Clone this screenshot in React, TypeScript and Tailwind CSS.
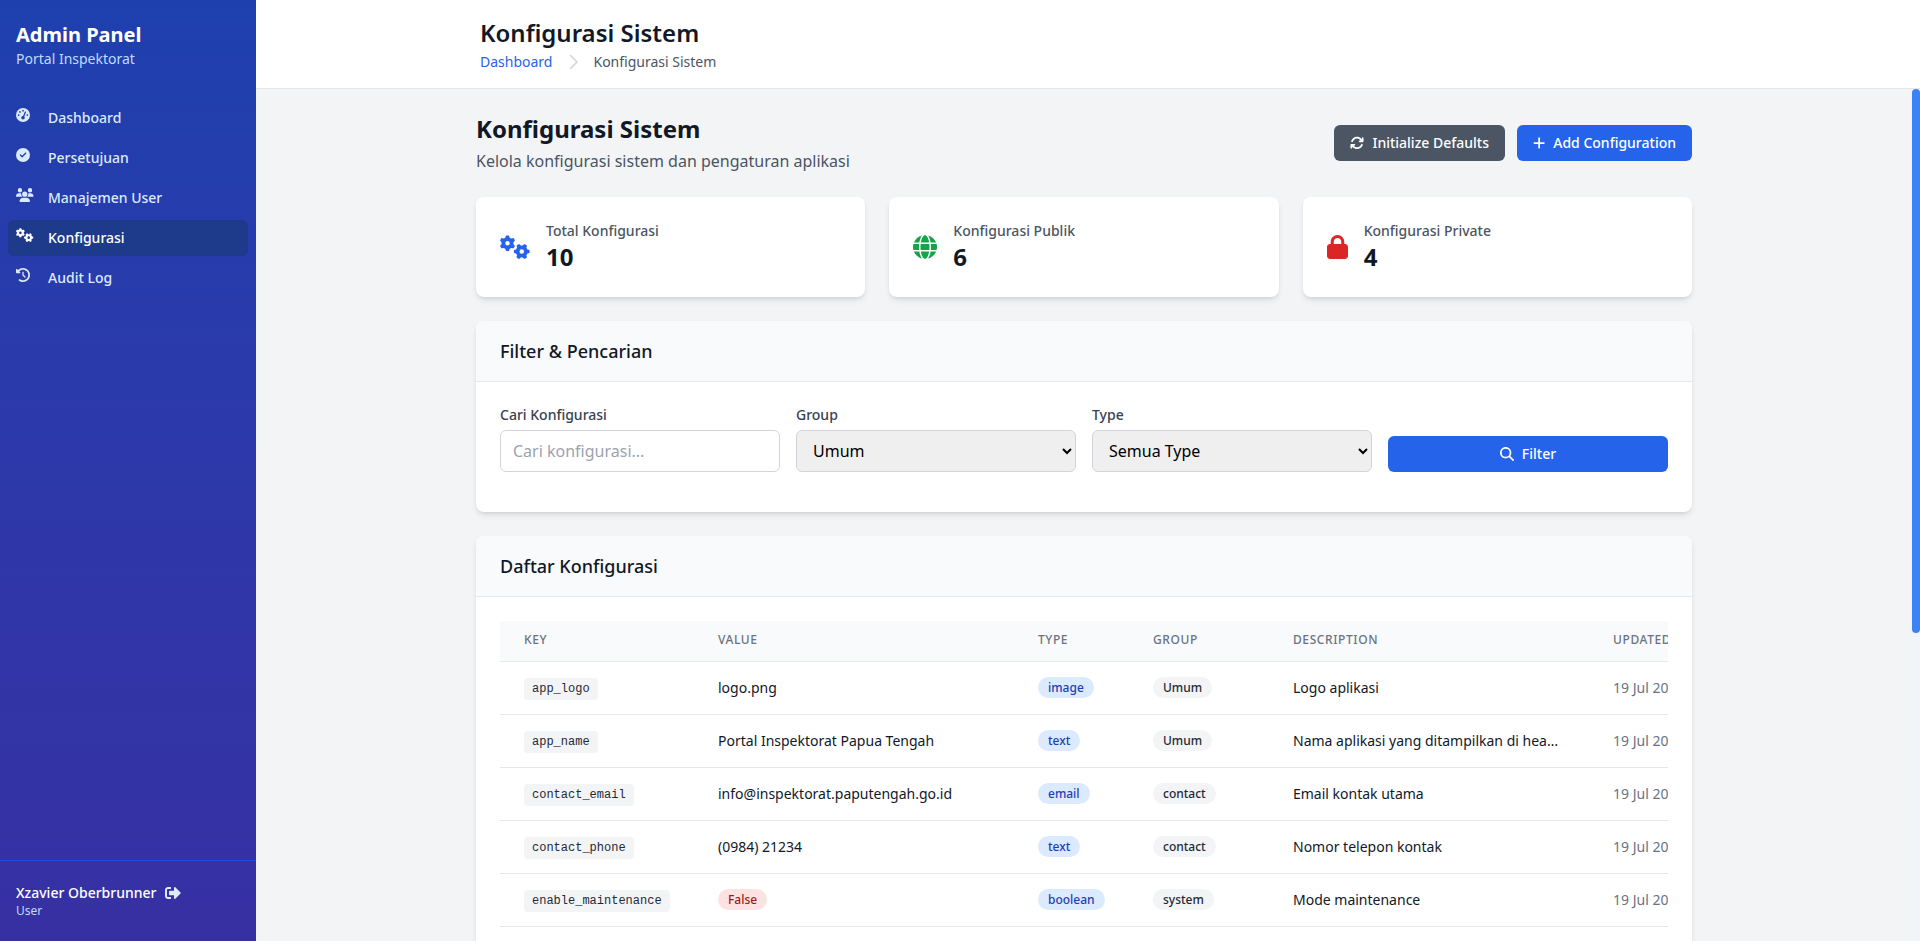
import React from 'react';
import { FaSignOutAlt } from 'react-icons/fa';
import {
    FaGaugeHigh,
    FaCircleCheck,
    FaUsers,
    FaGears,
    FaClockRotateLeft,
    FaArrowsRotate,
    FaPlus,
    FaGlobe,
    FaLock,
    FaMagnifyingGlass,
} from 'react-icons/fa6';

const navItems = [
    { label: 'Dashboard', icon: FaGaugeHigh, size: 'w-3.5' },
    { label: 'Persetujuan', icon: FaCircleCheck, size: 'w-3.5' },
    { label: 'Manajemen User', icon: FaUsers, size: 'w-[17.5px]' },
    { label: 'Konfigurasi', icon: FaGears, size: 'w-[17.5px]', active: true },
    { label: 'Audit Log', icon: FaClockRotateLeft, size: 'w-3.5' },
];

const rows = [
    { key: 'app_logo', value: 'logo.png', type: 'image', group: 'Umum', description: 'Logo aplikasi' },
    { key: 'app_name', value: 'Portal Inspektorat Papua Tengah', type: 'text', group: 'Umum', description: 'Nama aplikasi yang ditampilkan di header' },
    { key: 'contact_email', value: 'info@inspektorat.paputengah.go.id', type: 'email', group: 'contact', description: 'Email kontak utama' },
    { key: 'contact_phone', value: '(0984) 21234', type: 'text', group: 'contact', description: 'Nomor telepon kontak' },
    { key: 'enable_maintenance', value: false, type: 'boolean', group: 'system', description: 'Mode maintenance' },
    { key: 'enable_registration', value: true, type: 'boolean', group: 'system', description: 'Izinkan pendaftaran user' },
    { key: 'max_upload_size', value: '10', type: 'number', group: 'system', description: 'Ukuran maksimal upload (MB)' },
    { key: 'office_address', value: 'Nabire, Papua Tengah', type: 'text', group: 'contact', description: 'Alamat kantor' },
    { key: 'site_description', value: 'Portal resmi Inspektorat', type: 'text', group: 'Umum', description: 'Deskripsi situs' },
    { key: 'timezone', value: 'Asia/Jayapura', type: 'text', group: 'system', description: 'Zona waktu aplikasi' },
];

const stats = [
    { label: 'Total Konfigurasi', value: 10, icon: FaGears, className: 'w-[30px] text-[#2563eb]' },
    { label: 'Konfigurasi Publik', value: 6, icon: FaGlobe, className: 'w-6 text-[#16a34a]' },
    { label: 'Konfigurasi Private', value: 4, icon: FaLock, className: 'w-[21px] text-[#dc2626]' },
];

const Sidebar: React.FC = () => (
    <aside className="w-64 shrink-0 h-full flex flex-col bg-gradient-to-b from-[#1e40af] to-[#3730a3] text-white">
        <div className="px-4 pt-[21px] h-[100px]">
            <h1 className="text-xl font-bold leading-7">Admin Panel</h1>
            <p className="text-sm text-[#bfdbfe]">Portal Inspektorat</p>
        </div>
        <nav className="flex-1 px-2 flex flex-col gap-1">
            {navItems.map(item => (
                <a
                    key={item.label}
                    href="#"
                    className={`flex h-9 px-2 rounded-md text-sm font-medium leading-9 ${item.active ? 'bg-[#1e3a8a] text-white' : 'text-[#dbeafe]'}`}
                >
                    <span className="w-8 shrink-0 pt-2">
                        <item.icon className={`h-3.5 ${item.size}`} />
                    </span>
                    {item.label}
                </a>
            ))}
        </nav>
        <div className="h-[81px] border-t border-[#1d4ed8] px-4 pt-[22px]">
            <div className="flex items-center text-sm font-medium leading-5">
                Xzavier Oberbrunner
                <FaSignOutAlt className="ml-2 w-4 h-4 text-[#dbeafe]" />
            </div>
            <div className="text-xs text-[#bfdbfe]">User</div>
        </div>
    </aside>
);

const TopBar: React.FC = () => (
    <header className="h-[89px] shrink-0 bg-white border-b border-[#e5e7eb]">
        <div className="max-w-7xl mx-auto px-8 pt-[17px]">
            <h2 className="text-2xl font-semibold text-[#111827] leading-8">Konfigurasi Sistem</h2>
            <div className="flex items-center text-sm h-5 mt-[3px]">
                <a href="#" className="text-[#2563eb]">Dashboard</a>
                <svg className="w-6 h-6 ml-[9px] mr-2 text-[#d1d5db]" viewBox="0 0 24 24" fill="none" stroke="currentColor" strokeWidth="1.5">
                    <path d="M9 5l7 7-7 7" />
                </svg>
                <span className="text-[#4b5563]">Konfigurasi Sistem</span>
            </div>
        </div>
    </header>
);

const FilterCard: React.FC = () => (
    <section className="bg-white rounded-lg shadow-md mb-6 overflow-hidden">
        <div className="h-[61px] px-6 flex items-center bg-[#f9fafb] border-b border-[#e5e7eb]">
            <h3 className="text-lg font-medium text-[#111827]">Filter &amp; Pencarian</h3>
        </div>
        <div className="p-6">
            <form className="grid grid-cols-4 gap-4 items-end mb-4">
                <div>
                    <label className="block text-sm font-medium text-[#374151] leading-[18px] mb-1.5">Cari Konfigurasi</label>
                    <input
                        type="text"
                        placeholder="Cari konfigurasi..."
                        className="w-full h-[42px] px-3 border border-[#d1d5db] rounded-md bg-white placeholder:text-[#9ca3af]"
                    />
                </div>
                <div>
                    <label className="block text-sm font-medium text-[#374151] leading-[18px] mb-1.5">Group</label>
                    <select defaultValue="Umum" className="w-full h-[42px] px-3 border border-[#d1d5db] rounded-md bg-[#efefef] text-black">
                        <option>Semua Group</option>
                        <option>Umum</option>
                        <option>contact</option>
                        <option>system</option>
                    </select>
                </div>
                <div>
                    <label className="block text-sm font-medium text-[#374151] leading-[18px] mb-1.5">Type</label>
                    <select className="w-full h-[42px] px-3 border border-[#d1d5db] rounded-md bg-[#efefef] text-black">
                        <option>Semua Type</option>
                        <option>text</option>
                        <option>image</option>
                        <option>email</option>
                        <option>boolean</option>
                    </select>
                </div>
                <button type="button" className="h-9 flex items-center justify-center gap-2 bg-[#2563eb] text-white text-sm font-medium rounded-md">
                    <FaMagnifyingGlass className="w-3.5 h-3.5" />
                    Filter
                </button>
            </form>
        </div>
    </section>
);

const ConfigTable: React.FC = () => (
    <section className="bg-white rounded-lg shadow-md overflow-hidden">
        <div className="h-[61px] px-6 flex items-center bg-[#f9fafb] border-b border-[#e5e7eb]">
            <h3 className="text-lg font-medium text-[#111827]">Daftar Konfigurasi</h3>
        </div>
        <div className="p-6">
            <div className="overflow-x-auto">
                <table className="table-fixed w-[1300px] text-sm">
                    <colgroup>
                        <col className="w-[194px]" />
                        <col className="w-[320px]" />
                        <col className="w-[115px]" />
                        <col className="w-[140px]" />
                        <col className="w-[320px]" />
                        <col />
                    </colgroup>
                    <thead className="bg-[#f9fafb] border-b border-[#e5e7eb]">
                        <tr className="h-[40px]">
                            {['Key', 'Value', 'Type', 'Group', 'Description', 'Updated'].map(h => (
                                <th key={h} className="px-6 pb-[2px] text-left text-xs font-medium text-[#6b7280] uppercase tracking-wider">{h}</th>
                            ))}
                        </tr>
                    </thead>
                    <tbody>
                        {rows.map(row => (
                            <tr key={row.key} className="h-[53px] border-b border-[#e5e7eb]">
                                <td className="px-6">
                                    <code className="align-[1px] px-2 py-1 bg-[#f3f4f6] rounded text-xs font-['Liberation_Mono',monospace] text-[#1f2937]">{row.key}</code>
                                </td>
                                <td className="px-6 text-[#111827] truncate">
                                    {typeof row.value === 'boolean' ? (
                                        <span className={`align-[1px] px-2.5 py-0.5 rounded-full text-xs font-medium ${row.value ? 'bg-[#dcfce7] text-[#166534]' : 'bg-[#fee2e2] text-[#991b1b]'}`}>
                                            {row.value ? 'True' : 'False'}
                                        </span>
                                    ) : row.value}
                                </td>
                                <td className="px-6">
                                    <span className="align-[1px] px-2.5 py-0.5 rounded-full text-xs font-medium bg-[#dbeafe] text-[#1e40af]">{row.type}</span>
                                </td>
                                <td className="px-6">
                                    <span className="align-[1px] px-2.5 py-0.5 rounded-full text-xs font-medium bg-[#f3f4f6] text-[#1f2937]">{row.group}</span>
                                </td>
                                <td className="px-6 text-[#111827] truncate">{row.description}</td>
                                <td className="px-6 text-[#6b7280] whitespace-nowrap">19 Jul 2025</td>
                            </tr>
                        ))}
                    </tbody>
                </table>
            </div>
        </div>
    </section>
);

const App: React.FC = () => (
    <div className="flex h-screen overflow-hidden bg-[#f3f4f6] antialiased font-['Noto_Sans',sans-serif]">
        <Sidebar />
        <div className="flex-1 min-w-0 flex flex-col">
            <TopBar />
            <div className="flex-1 min-h-0 flex">
                <main className="flex-1 min-w-0 overflow-y-auto [scrollbar-width:none]">
                    <div className="max-w-7xl mx-auto px-8 pt-6 pb-[212px]">
                        <div className="flex items-center justify-between mb-6">
                            <div>
                                <h1 className="text-2xl font-bold text-[#111827] leading-8">Konfigurasi Sistem</h1>
                                <p className="text-[#4b5563] mt-1">Kelola konfigurasi sistem dan pengaturan aplikasi</p>
                            </div>
                            <div className="flex gap-3">
                                <button className="h-9 px-4 flex items-center gap-2 bg-[#4b5563] text-white text-sm font-medium rounded-md">
                                    <FaArrowsRotate className="w-3.5 h-3.5" />
                                    Initialize Defaults
                                </button>
                                <button className="h-9 px-4 flex items-center gap-2 bg-[#2563eb] text-white text-sm font-medium rounded-md">
                                    <FaPlus className="w-[12.25px] h-3.5" />
                                    Add Configuration
                                </button>
                            </div>
                        </div>

                        <div className="grid grid-cols-3 gap-6 mb-6">
                            {stats.map(stat => (
                                <div key={stat.label} className="h-[100px] bg-white rounded-lg shadow-md px-6 flex items-center gap-4">
                                    <stat.icon className={`h-6 shrink-0 ${stat.className}`} />
                                    <div>
                                        <p className="text-sm font-medium text-[#4b5563] leading-5">{stat.label}</p>
                                        <p className="text-2xl font-bold text-[#111827] leading-8">{stat.value}</p>
                                    </div>
                                </div>
                            ))}
                        </div>

                        <FilterCard />
                        <ConfigTable />
                    </div>
                </main>
                {/* scroll thumb, the headless browser hides the native one */}
                <div className="w-2 shrink-0 bg-[#f1f5f9]">
                    <div className="h-[544px] bg-[#3b82f6] rounded-full" />
                </div>
            </div>
        </div>
    </div>
);

export default App;
